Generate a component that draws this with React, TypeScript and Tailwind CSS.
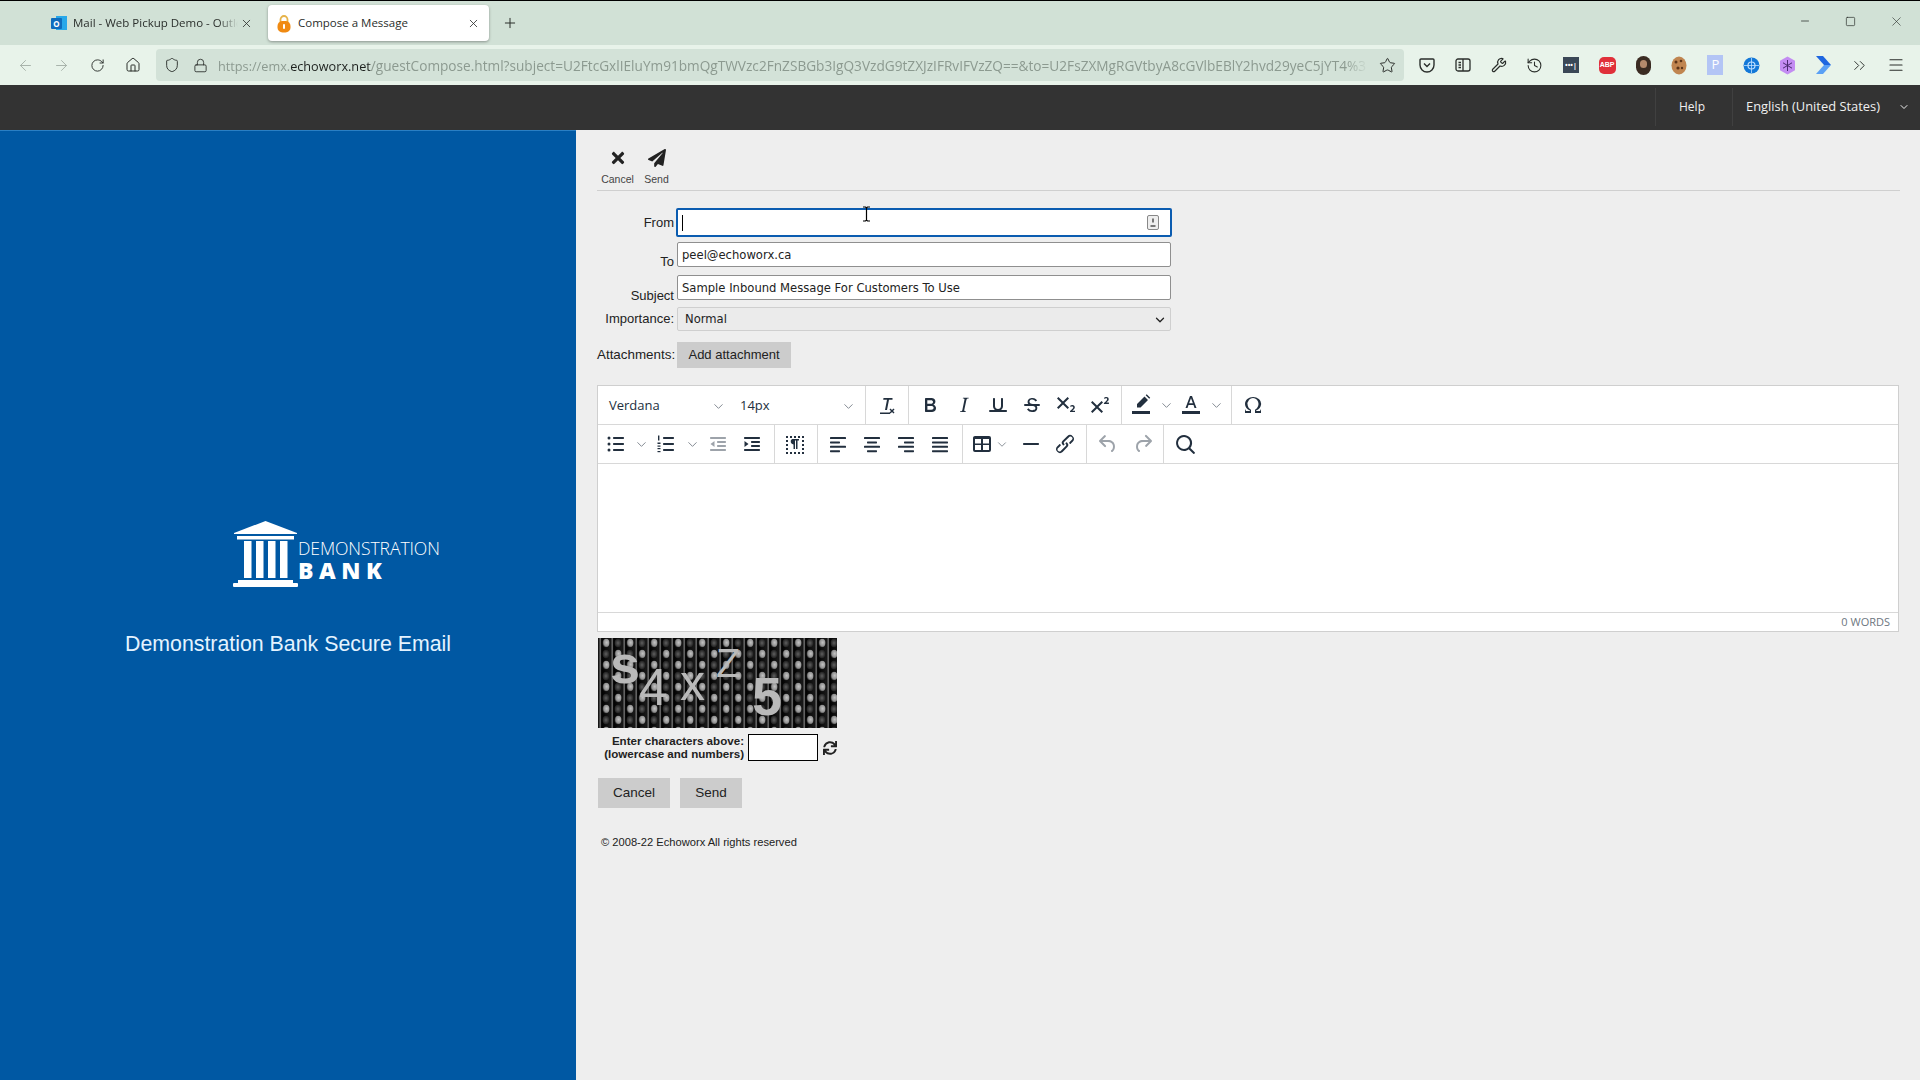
import type { ReactNode } from "react";
import { ArrowLeft, ArrowRight, ChevronDown, ChevronsRight, History, Home, Lock, Menu, Minus, Plus, RotateCw, Shield, Square, Star, Wrench, X } from "lucide-react";
import { FaPaperPlane, FaSync, FaTimes } from "react-icons/fa";

const uiFont = "font-['Open_Sans',sans-serif]";
const urlRest =
	"/guestCompose.html?subject=U2FtcGxlIEluYm91bmQgTWVzc2FnZSBGb3IgQ3VzdG9tZXJzIFRvIFVzZQ==&to=U2FsZXMgRGVtbyA8cGVlbEBlY2hvd29yeC5jYT4%3";

function Icon({ d, fill = "#222f3e", children }: { d?: string; fill?: string; children?: ReactNode }) {
	return (
		<svg width="24" height="24" viewBox="0 0 24 24" fill={fill}>
			{d && <path d={d} />}
			{children}
		</svg>
	);
}

// one editor toolbar button, 34px wide
function Tool({ children, className = "w-[34px]" }: { children: ReactNode; className?: string }) {
	return <div className={`flex h-[32px] shrink-0 items-center justify-center ${className}`}>{children}</div>;
}

function Chev({ className = "w-[16px]" }: { className?: string }) {
	return (
		<div className={`flex h-[32px] shrink-0 items-center justify-center ${className}`}>
			<ChevronDown size={15} strokeWidth={1.5} className="text-[#7c838c]" />
		</div>
	);
}

function Lines({ rows }: { rows: [number, number][] }) {
	return (
		<Icon>
			{rows.map(([x, w], i) => (
				<rect key={i} x={x} y={5 + i * 4.4} width={w} height="2" rx="0.6" />
			))}
		</Icon>
	);
}

function BrowserTabs() {
	return (
		<div className="flex h-[45px] shrink-0 items-start border-t border-black bg-[#d1e1d6] text-[11.5px] text-[#2a2e2b]">
			<div className="mt-[4px] flex h-[36px] w-[268px] shrink-0 items-center pl-[51px]">
				<div className="relative flex h-[16px] w-[16px] shrink-0 items-center justify-center">
					<div className="absolute right-0 top-[1px] h-[14px] w-[11px] bg-[#28a8ea]" />
					<div className="absolute left-0 top-[3px] flex h-[11px] w-[11px] items-center justify-center rounded-[1px] bg-[#0f6cbd] text-[8px] font-bold leading-none text-white">O</div>
				</div>
				<span className={`ml-[6px] w-[165px] overflow-hidden whitespace-nowrap [mask-image:linear-gradient(to_right,black_88%,transparent)] ${uiFont}`}>Mail - Web Pickup Demo - Outlook</span>
				<X size={13} className="ml-[2px] shrink-0" strokeWidth={1.5} />
			</div>
			<div className="mt-[4px] flex h-[36px] w-[221px] shrink-0 items-center rounded-[4px] bg-white pl-[9px] shadow-[0_1px_3px_rgba(0,0,0,0.35)]">
				<svg width="14" height="19" viewBox="0 0 14 19" className="shrink-0">
					<path d="M3.5 9V5.5a3.5 3.5 0 0 1 7 0V9" fill="none" stroke="#e6b34a" strokeWidth="1.8" />
					<rect x="0.5" y="7" width="13" height="11.5" rx="5" fill="#f08a12" />
					<rect x="6" y="10" width="2" height="5" rx="1" fill="#fff" />
				</svg>
				<span className={`ml-[7px] w-[169px] whitespace-nowrap ${uiFont}`}>Compose a Message</span>
				<X size={13} className="shrink-0" strokeWidth={1.5} />
			</div>
			<Plus size={16} strokeWidth={1.5} className="ml-[13px] mt-[14px] shrink-0" />
			<div className="ml-auto flex h-[40px] items-center text-[#2a2e2b]">
				<Minus size={12} strokeWidth={1.5} />
				<Square size={11} strokeWidth={1.5} className="ml-[34px]" />
				<X size={15} strokeWidth={1} className="ml-[33px] mr-[16px]" />
			</div>
		</div>
	);
}

function ExtIcon({ children }: { children: ReactNode }) {
	return <div className="flex h-[40px] w-[36.1px] shrink-0 items-center justify-center">{children}</div>;
}

function BrowserNav() {
	return (
		<div className="flex h-[40px] shrink-0 items-center bg-[#e8f3ea] pl-[7px] text-[#2a2e2b]">
			<div className="flex w-[36px] justify-center text-[#a3aea6]"><ArrowLeft size={17} strokeWidth={1.3} /></div>
			<div className="flex w-[36px] justify-center text-[#a3aea6]"><ArrowRight size={17} strokeWidth={1.3} /></div>
			<div className="flex w-[36px] justify-center"><RotateCw size={15} strokeWidth={1.5} /></div>
			<div className="flex w-[36px] justify-center"><Home size={16} strokeWidth={1.5} /></div>
			<div className="ml-[5px] flex h-[32px] w-[1248px] shrink-0 items-center rounded-[4px] bg-[#d3e2d8] pl-[8px]">
				<Shield size={16} strokeWidth={1.4} className="shrink-0" />
				<Lock size={15} strokeWidth={1.4} className="ml-[13px] shrink-0" />
				<div className={`ml-[10px] w-[1150px] overflow-hidden whitespace-nowrap pt-[2px] text-[12.7px] text-[#8c9a90] [mask-image:linear-gradient(to_right,black_98%,transparent)] ${uiFont}`}>
					https://emx.<span className="text-[#1d211e]">echoworx.net</span>
					<span className="text-[13.65px]">{urlRest}</span>
				</div>
				<Star size={17} strokeWidth={1.4} className="ml-auto mr-[8px] shrink-0" />
			</div>
			<div className="ml-[4.5px] flex">
				<ExtIcon>
					<svg width="16" height="16" viewBox="0 0 16 16" fill="none" stroke="#2a2e2b" strokeWidth="1.4">
						<path d="M2 2h12a1 1 0 0 1 1 1v5a7 7 0 0 1-14 0V3a1 1 0 0 1 1-1z" />
						<path d="M5 6.5 8 9.5l3-3" />
					</svg>
				</ExtIcon>
				<ExtIcon>
					<svg width="16" height="16" viewBox="0 0 16 16" fill="none" stroke="#2a2e2b" strokeWidth="1.3">
						<rect x="1" y="2" width="14" height="12" rx="2" />
						<path d="M8 2v12M3.5 5.5h2.5M3.5 8h2.5M3.5 10.5h2.5" />
					</svg>
				</ExtIcon>
				<ExtIcon><Wrench size={16} strokeWidth={1.8} /></ExtIcon>
				<ExtIcon><History size={17} strokeWidth={1.5} /></ExtIcon>
				<ExtIcon>
					<div className="flex h-[16px] w-[16px] items-center justify-center bg-[#3a4756] text-[7px] font-bold leading-none text-white">•••|</div>
				</ExtIcon>
				<ExtIcon>
					<div className="flex h-[17px] w-[17px] items-center justify-center rounded-[5px] bg-[#e0303a] font-['Liberation_Sans',sans-serif] text-[7px] font-bold text-white">ABP</div>
				</ExtIcon>
				<ExtIcon>
					<div className="relative h-[19px] w-[15px] overflow-hidden rounded-full bg-[#3a2b22]">
						<div className="absolute left-[4px] top-[4px] h-[8px] w-[7px] rounded-full bg-[#b58a6c]" />
					</div>
				</ExtIcon>
				<ExtIcon>
					<svg width="16" height="19" viewBox="0 0 16 19">
						<ellipse cx="8" cy="9.5" rx="7.5" ry="9" fill="#c08550" />
						<circle cx="5" cy="6" r="1.5" fill="#5b3418" />
						<circle cx="10" cy="5" r="1.3" fill="#5b3418" />
						<circle cx="7" cy="12" r="1.6" fill="#5b3418" />
						<circle cx="11" cy="12" r="1.2" fill="#5b3418" />
					</svg>
				</ExtIcon>
				<ExtIcon>
					<div className={`flex h-[20px] w-[16px] items-center justify-center bg-[#b3c5f5] text-[13px] text-white ${uiFont}`}>P</div>
				</ExtIcon>
				<ExtIcon>
					<svg width="17" height="17" viewBox="0 0 17 17">
						<circle cx="8.5" cy="8.5" r="8" fill="#1378d8" />
						<circle cx="8.5" cy="8.5" r="3.5" fill="none" stroke="#bfe0ff" strokeWidth="1.2" />
						<path d="M1 8.5h15M8.5 1v15" stroke="#bfe0ff" strokeWidth="0.8" />
					</svg>
				</ExtIcon>
				<ExtIcon>
					<svg width="17" height="19" viewBox="0 0 17 19">
						<path d="M8.5 0.5 16 4.8v9.4l-7.5 4.3L1 14.2V4.8z" fill="#c38cf2" />
						<path d="M8.5 4v11M4 6.8l9 5.4M13 6.8l-9 5.4" stroke="#4a2a70" strokeWidth="1" />
					</svg>
				</ExtIcon>
				<ExtIcon>
					<svg width="16" height="18" viewBox="0 0 16 18">
						<path d="M0 0h7l8 9H8z" fill="#1e66e0" />
						<path d="M8 9h7l-8 9H0z" fill="#5aa0f5" />
					</svg>
				</ExtIcon>
				<ExtIcon><ChevronsRight size={19} strokeWidth={1.2} /></ExtIcon>
				<ExtIcon><Menu size={18} strokeWidth={1.6} /></ExtIcon>
			</div>
		</div>
	);
}

function AppBar() {
	return (
		<div className={`flex h-[45px] shrink-0 items-center justify-end bg-[#333333] pb-[2px] text-[#f0f0f0] ${uiFont}`}>
			<div className="flex h-[38px] w-[77px] items-center justify-center border-l border-[#404040] pr-[4px] text-[12px]">Help</div>
			<div className="flex h-[38px] w-[188px] items-center border-l border-[#404040] pl-[13px] text-[12.9px]">
				<span className="whitespace-nowrap">English (United States)</span>
				<ChevronDown size={12} strokeWidth={2} className="ml-[18px] shrink-0" />
			</div>
		</div>
	);
}

function SidePanel() {
	return (
		<div className="w-[576px] shrink-0 border-t border-[#2a7fc4] bg-[#0058a3] pl-[233px] pt-[390px]">
			<div className="flex items-start">
				<svg width="65" height="66" viewBox="0 0 65 66" fill="#fff" className="shrink-0">
					<path d="M32.5 0 64 12v1H1v-1z" />
					<rect x="4" y="15" width="57" height="3.5" />
					<rect x="11" y="20" width="7.5" height="37" />
					<rect x="23" y="20" width="7.5" height="37" />
					<rect x="35" y="20" width="7.5" height="37" />
					<rect x="47" y="20" width="7.5" height="37" />
					<rect x="5" y="59" width="55" height="3" />
					<rect x="0" y="62" width="65" height="4" rx="1" />
				</svg>
				<div className="pt-[17px] text-white">
					<div className="whitespace-nowrap font-['Open_Sans',sans-serif] text-[17.6px] font-light leading-[20px] tracking-[-0.1px]">DEMONSTRATION</div>
					<div className="whitespace-nowrap font-['Open_Sans',sans-serif] text-[23px] font-extrabold leading-[24px] tracking-[5.5px]">BANK</div>
				</div>
			</div>
			<div className="ml-[-233px] mt-[45px] w-[576px] text-center font-['Liberation_Sans',sans-serif] text-[21.33px] leading-[24px] text-[#e4f3ff]">Demonstration Bank Secure Email</div>
		</div>
	);
}

function Captcha() {
	return (
		<svg width="239" height="90" viewBox="0 0 239 90" className="block">
			<defs>
				<linearGradient id="fade" x1="0" y1="0" x2="1" y2="0">
					<stop offset="0" stopColor="#000" />
					<stop offset="0.2" stopColor="#6a6a6a" />
					<stop offset="0.3" stopColor="#000" />
					<stop offset="1" stopColor="#181818" />
				</linearGradient>
				<radialGradient id="dot" cx="0.6" cy="0.45" r="0.6">
					<stop offset="0" stopColor="#c4c4c4" />
					<stop offset="0.7" stopColor="#8f8f8f" />
					<stop offset="1" stopColor="#2a2a2a" />
				</radialGradient>
				<radialGradient id="dim" cx="0.5" cy="0.5" r="0.6">
					<stop offset="0" stopColor="#5f5f5f" />
					<stop offset="1" stopColor="#141414" />
				</radialGradient>
				<pattern id="bars" width="24" height="22" patternUnits="userSpaceOnUse">
					<rect width="12" height="22" fill="url(#fade)" />
					<rect x="12" width="12" height="22" fill="url(#fade)" />
					<ellipse cx="8" cy="5" rx="3.4" ry="4.2" fill="url(#dot)" />
					<ellipse cx="8" cy="16" rx="3.4" ry="4.2" fill="url(#dim)" />
					<ellipse cx="20" cy="5" rx="3.4" ry="4.2" fill="url(#dim)" />
					<ellipse cx="20" cy="16" rx="3.4" ry="4.2" fill="url(#dot)" />
				</pattern>
			</defs>
			<rect width="239" height="90" fill="url(#bars)" />
			<g fontFamily="'Liberation Sans',sans-serif" fill="#b9b9b9">
				<text x="12" y="45" fontSize="54" fontWeight="700">s</text>
				<text x="41" y="67" fontSize="52">4</text>
				<text x="82" y="62" fontSize="50">x</text>
				<text x="118" y="39" fontSize="40">Z</text>
				<text x="154" y="77" fontSize="54" fontWeight="700">5</text>
			</g>
		</svg>
	);
}

function FormLabel({ children, className = "" }: { children: ReactNode; className?: string }) {
	return <div className={`w-[77px] shrink-0 whitespace-nowrap text-right leading-[16px] text-[#222] ${className}`}>{children}</div>;
}

function Editor() {
	return (
		<div className="mt-[17px] mr-[21px] border border-[#cfcfcf] bg-white text-[#222f3e]">
			<div className="flex h-[39px] items-center border-b border-[#d8d8d8]">
				<div className={`flex h-full w-[133px] shrink-0 items-center pl-[11px] pt-[2px] text-[13px] ${uiFont}`}>
					Verdana
					<ChevronDown size={15} strokeWidth={1.5} className="ml-[51px] text-[#7c838c]" />
				</div>
				<div className={`flex h-full w-[135px] shrink-0 items-center border-r border-[#d8d8d8] pl-[9px] pt-[2px] text-[13px] ${uiFont}`}>
					14px
					<ChevronDown size={15} strokeWidth={1.5} className="ml-[71px] text-[#7c838c]" />
				</div>
				<div className="flex h-full w-[43px] shrink-0 items-center justify-center border-r border-[#d8d8d8] pr-[2px]">
					<Icon>
						<path d="M9.5 5h9v1.8h-3.5L13 17h-2l2-10.2H9.2zM6 19.5h10V21H6z" />
						<path d="m16.5 15.5 1.5 1.6 1.5-1.6 1 1-1.5 1.5 1.5 1.5-1 1-1.5-1.6-1.5 1.6-1-1 1.5-1.5-1.5-1.5z" />
					</Icon>
				</div>
				<div className="flex h-full w-[213px] shrink-0 items-center border-r border-[#d8d8d8] pl-[4px]">
					<Tool><Icon d="M7.8 19c-.3 0-.5 0-.6-.2l-.2-.5V5.7c0-.2 0-.4.2-.5l.6-.2h5c1.5 0 2.7.3 3.5 1 .7.6 1.1 1.4 1.1 2.5a3 3 0 0 1-.6 1.9c-.4.6-1 1-1.6 1.2.4.1.9.3 1.3.6s.8.7 1 1.2c.4.4.5 1 .5 1.6 0 1.3-.4 2.3-1.3 3-.8.7-2.1 1-3.8 1H7.8zm5-8.3c.6 0 1.2-.1 1.6-.5.4-.3.6-.7.6-1.3 0-1.1-.8-1.7-2.3-1.7H9.3v3.5h3.4zm.5 6c.7 0 1.3-.1 1.7-.4.4-.4.6-.9.6-1.5s-.2-1-.7-1.4c-.4-.3-1-.4-2-.4H9.4v3.8h4z" /></Tool>
					<Tool><Icon d="M16.7 4.7l-.1.9h-.3c-.6 0-1 0-1.4.3-.3.3-.4.6-.5 1.1l-2.1 9.8v.6c0 .5.4.8 1.4.8h.2l-.2.8H8l.2-.8h.2c1.1 0 1.8-.5 2-1.5l2-9.8.1-.5c0-.6-.4-.8-1.4-.8h-.3l.2-.9h5.8z" /></Tool>
					<Tool><Icon d="M16 5c.6 0 1 .4 1 1v7c0 2.8-2.2 5-5 5s-5-2.2-5-5V6c0-.6.4-1 1-1s1 .4 1 1v7c0 1.7 1.3 3 3 3s3-1.3 3-3V6c0-.6.4-1 1-1zM4 17h16c.6 0 1 .4 1 1s-.4 1-1 1H4a1 1 0 1 1 0-2z" /></Tool>
					<Tool><Icon d="M15.6 8.5c-.5-.7-1-1.1-1.3-1.3-.6-.4-1.3-.6-2-.6-2.7 0-2.8 1.7-2.8 2.1 0 1.6 1.8 2 3.2 2.3 4.4.9 4.6 2.8 4.6 3.9 0 1.4-.7 4.1-5 4.1A6.2 6.2 0 0 1 7 16.4l1.5-1.1c.4.6 1.6 2 3.7 2 1.6 0 2.5-.4 3-1.2.4-.8.3-2-.8-2.6-.7-.4-1.6-.7-2.9-1-1-.2-3.9-.8-3.9-3.6C7.6 6 10.3 5 12.4 5c2.9 0 4.2 1.6 4.7 2.4l-1.5 1.1zM5 11h14a1 1 0 0 1 0 2H5a1 1 0 0 1 0-2z" /></Tool>
					<Tool><Icon d="M10.4 10l4.6 4.6-1.4 1.4L9 11.4 4.4 16 3 14.6 7.6 10 3 5.4 4.4 4 9 8.6 13.6 4 15 5.4 10.4 10zM21 19h-5v-1l1-.8 1.7-1.6c.3-.4.5-.8.5-1.2 0-.3 0-.6-.2-.7-.2-.2-.5-.3-.9-.3a2 2 0 0 0-.8.2l-.7.3-.4-1.1 1-.6 1.2-.2c.8 0 1.4.3 1.8.7.4.4.6.9.6 1.5s-.2 1.1-.5 1.6a8 8 0 0 1-1.3 1.3l-.6.6h2.6V19z" /></Tool>
					<Tool><Icon d="M15 9.4L10.4 14l4.6 4.6-1.4 1.4L9 15.4 4.4 20 3 18.6 7.6 14 3 9.4 4.4 8 9 12.6 13.6 8 15 9.4zm5.9 1.6h-5v-1l1-.8 1.7-1.6c.3-.5.5-.9.5-1.3 0-.3 0-.5-.2-.7-.2-.2-.5-.3-.9-.3l-.8.2-.7.4-.4-1.2c.2-.2.5-.4 1-.5.3-.2.8-.2 1.2-.2.8 0 1.4.2 1.8.6.4.4.6 1 .6 1.6 0 .5-.2 1-.5 1.5l-1.3 1.4-.6.5h2.6V11z" /></Tool>
				</div>
				<div className="flex h-full w-[110px] shrink-0 items-center border-r border-[#d8d8d8] pl-[2px]">
					<Tool>
						<Icon>
							<path d="M15.5 3.5 19 7l-7.5 7.5H8v-3.500zM16.7 2.3l1-1 3.5 3.5-1 1z" />
							<rect x="3" y="18" width="18" height="3" />
						</Icon>
					</Tool>
					<Chev />
					<Tool>
						<Icon>
							<path d="M11 3h2l4.500 12h-2l-1-3h-5l-1 3h-2zm-.9 7.300h3.800L12 5.200z" />
							<rect x="3" y="18" width="18" height="3" />
						</Icon>
					</Tool>
					<Chev />
				</div>
				<div className="flex h-full items-center pl-[4px]">
					<Tool><Icon d="M15 18h4l1-2v4h-6v-3.3l1.4-1a6 6 0 0 0 1.8-2.9 6.3 6.3 0 0 0-.1-4.1 5.8 5.8 0 0 0-3-3.2c-.6-.3-1.3-.5-2.1-.5a5.1 5.1 0 0 0-3.9 1.8 6.3 6.3 0 0 0-1.3 6 6.2 6.2 0 0 0 1.8 3l1.4.9V20H4v-4l1 2h4v-.5l-2-1L5.4 15A6.5 6.5 0 0 1 4 11c0-1 .2-1.9.6-2.7A7 7 0 0 1 6.3 6C7.1 5.4 8 5 9 4.5c1-.3 2-.5 3.1-.5a8.8 8.8 0 0 1 5.7 2 7 7 0 0 1 1.7 2.3 6 6 0 0 1 .2 4.8c-.2.7-.6 1.3-1 1.9a7.6 7.6 0 0 1-3.6 2.5v.5z" /></Tool>
				</div>
			</div>
			<div className="flex h-[39px] items-center border-b border-[#d8d8d8]">
				<div className="flex h-full w-[177px] shrink-0 items-center border-r border-[#d8d8d8] pl-[1px]">
					<Tool>
						<Icon>
							<circle cx="5" cy="6" r="1.5" /><circle cx="5" cy="12" r="1.5" /><circle cx="5" cy="18" r="1.5" />
							<rect x="9" y="5" width="11" height="2" rx="0.7" /><rect x="9" y="11" width="11" height="2" rx="0.7" /><rect x="9" y="17" width="11" height="2" rx="0.7" />
						</Icon>
					</Tool>
					<Chev />
					<Tool>
						<Icon>
							<rect x="4" y="3.5" width="1.4" height="5" /><rect x="3.5" y="10.5" width="3" height="1.5" /><rect x="3.5" y="13.5" width="3" height="1.2" /><rect x="3.5" y="16" width="3" height="1.2" /><rect x="3.5" y="19" width="3" height="1.2" />
							<rect x="9" y="5" width="11" height="2" rx="0.7" /><rect x="9" y="11" width="11" height="2" rx="0.7" /><rect x="9" y="17" width="11" height="2" rx="0.7" />
						</Icon>
					</Tool>
					<Chev className="w-[18px]" />
					<Tool>
						<Icon fill="#9da3aa">
							<rect x="4" y="5" width="16" height="2" rx="0.7" /><rect x="11" y="9" width="9" height="2" rx="0.7" /><rect x="11" y="13" width="9" height="2" rx="0.7" /><rect x="4" y="17" width="16" height="2" rx="0.7" />
							<path d="M8.5 9 4.5 12l4 3z" />
						</Icon>
					</Tool>
					<Tool>
						<Icon>
							<rect x="4" y="5" width="16" height="2" rx="0.7" /><rect x="11" y="9" width="9" height="2" rx="0.7" /><rect x="11" y="13" width="9" height="2" rx="0.7" /><rect x="4" y="17" width="16" height="2" rx="0.7" />
							<path d="m4.5 9 4 3-4 3z" />
						</Icon>
					</Tool>
				</div>
				<div className="flex h-full w-[43px] shrink-0 items-center justify-center border-r border-[#d8d8d8] pr-[2px]">
					<Icon>
						<path d="M9 7h7v1.500h-1.500V17H13V8.500h-1V17h-1.500v-4.500A3 3 0 0 1 9 7z" />
						<path d="M3 4h2v2H3zm4 0h2v2H7zm4 0h2v2h-2zm4 0h2v2h-2zm4 0h2v2h-2zM3 8h2v2H3zm16 0h2v2h-2zM3 12h2v2H3zm16 0h2v2h-2zM3 16h2v2H3zm16 0h2v2h-2zM3 20h2v2H3zm4 0h2v2H7zm4 0h2v2h-2zm4 0h2v2h-2zm4 0h2v2h-2z" />
					</Icon>
				</div>
				<div className="flex h-full w-[145px] shrink-0 items-center border-r border-[#d8d8d8] pl-[3px]">
					<Tool><Lines rows={[[4, 16], [4, 10], [4, 16], [4, 10]]} /></Tool>
					<Tool><Lines rows={[[4, 16], [7, 10], [4, 16], [7, 10]]} /></Tool>
					<Tool><Lines rows={[[4, 16], [10, 10], [4, 16], [10, 10]]} /></Tool>
					<Tool><Lines rows={[[4, 16], [4, 16], [4, 16], [4, 16]]} /></Tool>
				</div>
				<div className="flex h-full w-[124px] shrink-0 items-center border-r border-[#d8d8d8] pl-[2px]">
					<Tool>
						<Icon d="M19 4a2 2 0 0 1 2 2v12a2 2 0 0 1-2 2H5a2 2 0 0 1-2-2V6c0-1.100.9-2 2-2h14zm-8 9H5v5h6v-5zm8 0h-6v5h6v-5zm0-6h-6v4.500h6V7zm-8 0H5v4.500h6V7z" />
					</Tool>
					<Chev className="-ml-[4px] w-[14px]" />
					<Tool className="ml-[5px] w-[34px]"><Icon><rect x="4" y="11" width="16" height="2" rx="0.8" /></Icon></Tool>
					<Tool><Icon d="M6.2 12.3a1 1 0 0 1 1.4 1.4l-2 2a2 2 0 1 0 2.6 2.8l4.8-4.8a1 1 0 0 0 0-1.4 1 1 0 1 1 1.4-1.3 2.9 2.9 0 0 1 0 4L9.6 20a3.9 3.9 0 0 1-5.5-5.5l2-2zm11.6-.6a1 1 0 0 1-1.4-1.4l2-2a2 2 0 1 0-2.6-2.8L11 10c-.4.4-.4 1 0 1.4a1 1 0 1 1-1.4 1.3 2.9 2.9 0 0 1 0-4L14.4 4a3.9 3.9 0 0 1 5.5 5.5l-2 2z" /></Tool>
				</div>
				<div className="flex h-full w-[77px] shrink-0 items-center border-r border-[#d8d8d8] pl-[4px]">
					<Tool><Icon fill="#9da3aa" d="M6.4 8H12c3.7 0 6.2 2 6.8 5.1.6 2.7-.4 5.6-2.3 6.8a1 1 0 0 1-1-1.8c1.1-.6 1.8-2.7 1.4-4.6-.5-2.1-2.1-3.5-4.9-3.5H6.4l3.3 3.3a1 1 0 1 1-1.4 1.4l-5-5a1 1 0 0 1 0-1.4l5-5a1 1 0 0 1 1.4 1.4L6.4 8z" /></Tool>
					<Tool className="w-[36px]"><Icon fill="#9da3aa" d="M17.6 10H12c-2.8 0-4.4 1.4-4.9 3.5-.4 2 .3 4 1.4 4.6a1 1 0 1 1-1 1.8c-2-1.2-2.9-4.1-2.3-6.8.6-3 3-5.1 6.8-5.1h5.6l-3.3-3.3a1 1 0 1 1 1.4-1.4l5 5a1 1 0 0 1 0 1.4l-5 5a1 1 0 0 1-1.4-1.4l3.3-3.3z" /></Tool>
				</div>
				<div className="flex h-full items-center pl-[4px]">
					<Tool><Icon d="M16 17.3a8 8 0 1 1 1.4-1.4l4.3 4.4a1 1 0 0 1-1.4 1.4l-4.4-4.3zm-5-.3a6 6 0 1 0 0-12 6 6 0 0 0 0 12z" /></Tool>
				</div>
			</div>
			<div className="h-[148px]" />
			<div className={`flex h-[19px] items-center justify-end border-t border-[#d8d8d8] pr-[8px] text-[11px] text-[#6d7680] ${uiFont}`}>0 WORDS</div>
		</div>
	);
}

function ComposePanel() {
	return (
		<div className="min-w-0 flex-1 bg-[#eeeeee] pl-[21px] font-['Liberation_Sans',sans-serif]">
			<div className="mr-[20px] flex h-[61px] border-b border-[#cfcfcf] pt-[19px] text-[10.5px] text-[#444]">
				<div className="ml-[4px] flex w-[33px] flex-col items-center">
					<FaTimes size={18} className="text-[#222]" />
					<span className="mt-[6px] leading-[12px]">Cancel</span>
				</div>
				<div className="ml-[6px] flex w-[33px] flex-col items-center">
					<FaPaperPlane size={18} className="text-[#222]" />
					<span className="mt-[6px] leading-[12px]">Send</span>
				</div>
			</div>

			<div className="mt-[17px] flex h-[29px] items-start">
				<FormLabel className="pt-[7px] text-[13px]">From</FormLabel>
				<div className="ml-[2px] flex h-[29px] w-[496px] items-center justify-between rounded-[2px] border-2 border-[#0b5cb0] bg-white pl-[4px] pr-[11px]">
					<div className="h-[16px] w-px bg-black" />
					<svg width="12" height="15" viewBox="0 0 12 15" fill="none">
						<rect x="0.5" y="0.5" width="11" height="14" rx="1.5" fill="#eee" stroke="#888" />
						<path d="M6 3.5v4M3.5 11h5" stroke="#777" strokeWidth="2" />
					</svg>
				</div>
			</div>
			<div className="mt-[5px] flex h-[25px] items-start">
				<FormLabel className="pt-[12px] text-[13px]">To</FormLabel>
				<div className="ml-[3px] flex h-[25px] w-[494px] items-center rounded-[2px] border border-[#8f8f8f] bg-white pl-[4px] pt-[2px] font-['DejaVu_Sans',sans-serif] text-[11.6px] text-[#222]">peel@echoworx.ca</div>
			</div>
			<div className="mt-[8px] flex h-[25px] items-start">
				<FormLabel className="pt-[13px] text-[13px]">Subject</FormLabel>
				<div className="ml-[3px] flex h-[25px] w-[494px] items-center rounded-[2px] border border-[#8f8f8f] bg-white pl-[4px] pt-[2px] font-['DejaVu_Sans',sans-serif] text-[11.6px] text-[#222]">Sample Inbound Message For Customers To Use</div>
			</div>
			<div className="mt-[7px] flex h-[24px] items-center">
				<FormLabel className="text-[13px]">Importance:</FormLabel>
				<div className="ml-[3px] flex h-[24px] w-[494px] items-center justify-between rounded-[2px] border border-[#cfcfcf] bg-[#ebebeb] pl-[7px] pr-[3px] pt-[1px] font-['DejaVu_Sans',sans-serif] text-[11.6px] text-[#222]">
					Normal
					<ChevronDown size={14} strokeWidth={2.2} />
				</div>
			</div>
			<div className="mt-[11px] flex h-[26px] items-center">
				<FormLabel className="text-[13.4px]">Attachments:</FormLabel>
				<div className="ml-[3px] flex h-[26px] w-[114px] items-center justify-center bg-[#cccccc] text-[13px] text-[#222]">Add attachment</div>
			</div>

			<Editor />

			<div className="ml-px mt-[6px]">
				<Captcha />
				<div className="mt-[6px] flex items-center">
					<div className="w-[146px] shrink-0 -translate-y-[1px] whitespace-nowrap text-right text-[11.6px] font-bold leading-[13px] text-[#222]">
						Enter characters above:
						<br />
						(lowercase and numbers)
					</div>
					<div className="ml-[4px] h-[27px] w-[70px] shrink-0 border border-black bg-white" />
					<FaSync size={14} className="ml-[5px] text-[#222]" />
				</div>
				<div className="mt-[17px] flex text-[13.5px] text-[#222]">
					<div className="flex h-[30px] w-[72px] items-center justify-center bg-[#cccccc]">Cancel</div>
					<div className="ml-[10px] flex h-[30px] w-[62px] items-center justify-center bg-[#cccccc]">Send</div>
				</div>
				<div className="ml-[3px] mt-[27px] text-[11.15px] leading-[14px] text-[#222]">© 2008-22 Echoworx All rights reserved</div>
			</div>
		</div>
	);
}

export default function App() {
	return (
		<div className="relative flex h-screen flex-col overflow-hidden">
			<BrowserTabs />
			<BrowserNav />
			<AppBar />
			<div className="flex min-h-0 flex-1">
				<SidePanel />
				<ComposePanel />
			</div>
			{/* mouse pointer sits over the From box */}
			<svg width="9" height="16" viewBox="0 0 9 16" className="absolute left-[862px] top-[206px]" fill="none" stroke="#000" strokeWidth="1.2">
				<path d="M1 1h2.5L4.5 2l1-1H8M4.5 2v12M1 15h2.5l1-1 1 1H8" />
			</svg>
		</div>
	);
}
